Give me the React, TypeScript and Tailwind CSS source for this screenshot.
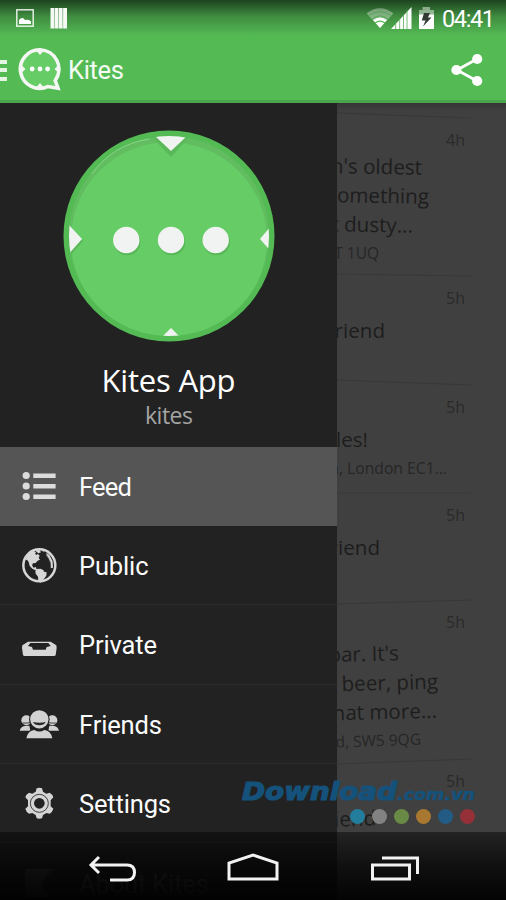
import type { ReactNode } from "react";

function StatusBar() {
  return (
    <div className="flex h-9 shrink-0 items-center bg-linear-to-b from-[#1d431f] via-[#3f8c40] via-45% to-[#54bb54] pl-4 pr-[9px]">
      <svg className="h-[18px] w-[18px]" viewBox="0 0 18 18">
        <rect x="0.8" y="0.8" width="16.4" height="16.4" fill="none" stroke="#fff" strokeOpacity=".85" strokeWidth="1.5" />
        <path d="M3 15V11L5 9.2L7 9L9 11L11 10.8L13 11L15 12.5V15Z" fill="#fff" />
      </svg>
      <svg className="ml-4 h-[22px] w-[18px]" viewBox="0 0 18 22">
        <path d="M.5 1H4.200V21.500H.5ZM4.700 1H8.400V21.500H4.700ZM8.900 1H12.600V21.500H8.900ZM13.100 1H17V21.500H13.100Z" fill="#f5faf5" />
      </svg>
      <div className="ml-auto flex items-center">
        <svg className="h-[22px] w-[28px]" viewBox="0 0 28 22">
          <path d="M0.5 6.3Q14-4 27.5 6.3L14 21Z" fill="#fff" fillOpacity=".35" />
          <path d="M3.5 8.3Q14 1 24.5 8.3M6.5 11.8Q14 6 21.5 11.8" fill="none" stroke="#55a655" strokeWidth="1" />
          <path d="M7 13Q14 8 21 13L14 21Z" fill="#fff" />
          <path d="M9 16Q14 12.4 19 16" fill="none" stroke="#54bb54" strokeWidth="1.2" />
        </svg>
        <svg className="-ml-[3px] h-[22px] w-[21px]" viewBox="0 0 21 22">
          <path d="M0 22L20.5 0V22Z" fill="#fff" />
          <path d="M4.7 15V22M8.7 11V22M12.5 7V22M16 3V22" stroke="#54aa54" strokeWidth=".8" />
        </svg>
        <svg className="ml-[7px] h-[22px] w-[15px]" viewBox="0 0 15 22">
          <path d="M0 3H3.5V0H11V3H15V8H0Z" fill="#fff" fillOpacity=".45" />
          <path d="M0 7.5H15V22H0Z" fill="#fff" />
          <path d="M5 6H11L9 10.5H12.5L4 19.5L6.5 13.5H2.8Z" fill="#333b33" />
        </svg>
        <svg className="ml-[7px] h-7 w-[56px]" viewBox="0 0 56 28">
          <text x="1" y="22.500" textLength="53" fontFamily="Roboto, sans-serif" fontSize="23.500" fill="#fff">04:41</text>
        </svg>
      </div>
    </div>
  );
}

function KitesLogo() {
  return (
    <svg className="ml-[11px] h-[44px] w-[44px]" viewBox="0 0 44 44">
      <path d="M22 2.8A19.3 19.3 0 1 0 30 39.5L40 41.2L37.2 33.5A19.3 19.3 0 0 0 22 2.8Z" fill="#66cc66" stroke="#f5f7f5" strokeWidth="3.6" />
      <path d="M18.5 4H25.5L22 8ZM18.5 40H25.5L22 36ZM4 18.5V25.5L7.5 22ZM40 18.5V25.5L36.5 22Z" fill="#f5f7f5" />
      <g fill="#fff">
        <circle cx="14.2" cy="22" r="2.4" />
        <circle cx="22" cy="22" r="2.4" />
        <circle cx="29.6" cy="22" r="2.4" />
      </g>
    </svg>
  );
}

function ActionBar() {
  return (
    <div className="flex h-[67px] shrink-0 items-center border-b-[3px] border-[#4ba64b] bg-[#54bb54] pt-[2px]">
      <div className="mt-[2px] flex w-[7px] flex-col gap-[4.5px]">
        <i className="h-[4px] bg-[#e4f5e4]" />
        <i className="h-[4px] bg-[#e4f5e4]" />
        <i className="h-[4px] bg-[#e4f5e4]" />
      </div>
      <KitesLogo />
      <svg className="ml-[6px] h-[34px] w-[60px]" viewBox="0 0 60 34">
        <text x="0" y="27" textLength="56" fontFamily="Roboto, sans-serif" fontSize="25.5" fill="#f4fbf4">Kites</text>
      </svg>
      <svg className="ml-auto mr-[23px] mt-px h-[34px] w-[32px]" viewBox="0 0 32 34">
        <path d="M26 6L6 17L26 28" fill="none" stroke="#fff" strokeWidth="2.8" />
        <g fill="#fff">
          <circle cx="26.2" cy="6" r="5.1" />
          <circle cx="5.4" cy="17" r="5.1" />
          <circle cx="26.2" cy="28" r="5.1" />
        </g>
      </svg>
    </div>
  );
}

function Avatar() {
  return (
    <svg className="h-[212px] w-[212px]" viewBox="0 0 212 212">
      <defs>
        <clipPath id="disc">
          <circle cx="106" cy="106" r="100" />
        </clipPath>
      </defs>
      <circle cx="106" cy="106" r="105.5" fill="#54bb54" />
      <circle cx="106" cy="106" r="100" fill="#61bd60" />
      <circle cx="106" cy="110" r="98" fill="#66cc66" clipPath="url(#disc)" />
      <path d="M29 44Q49 15 86 9" fill="none" stroke="#8ad58a" strokeWidth="1" />
      <g clipPath="url(#disc)">
        <path d="M89 7H126L108 27Z" fill="#5ab85a" />
        <path d="M92 6H124L108 21Z" fill="#f1f3f2" />
        <path d="M6 96L20 111L7 126Z" fill="#5ab85a" />
        <path d="M5 94L19 109L5 125ZM213 90L197 109L213 127ZM96 210L108 198L120 210Z" fill="#f1f3f2" />
      </g>
      <g fill="#58b858">
        <circle cx="64.3" cy="112" r="13.3" />
        <circle cx="109" cy="112" r="13.3" />
        <circle cx="153.7" cy="112" r="13.3" />
      </g>
      <g fill="#f1f3f2">
        <circle cx="63.3" cy="110" r="13.2" />
        <circle cx="108" cy="110" r="13.2" />
        <circle cx="152.7" cy="110" r="13.2" />
      </g>
    </svg>
  );
}

function FeedIcon() {
  return (
    <svg className="h-10 w-10" viewBox="0 0 40 40" fill="#dcdcdc">
      <circle cx="7.2" cy="9.5" r="3.6" />
      <circle cx="7.2" cy="20" r="3.6" />
      <circle cx="7.2" cy="30.5" r="3.6" />
      <path d="M14.3 7.5H36.6V12H14.3ZM14.3 18H36.6V22.5H14.3ZM14.3 28.5H36.6V33H14.3Z" />
    </svg>
  );
}

function GlobeIcon() {
  return (
    <svg className="h-10 w-10" viewBox="57 44 120 120" fill="#d6d6d6">
      <circle cx="118" cy="105" r="48" fill="none" stroke="#d6d6d6" strokeWidth="7.5" />
      <path d="M76 90L82 76L92 66L102 62L108 66L105 71L111 74L113 70L119 76L116 82L120 88L113 91L107 98L99 99L96 105L101 112L108 110L110 118L105 119L97 115L89 107L86 95L81 88Z" />
      <path d="M106 61L117 57L123 66L115 69ZM126 60L132 59L130 66ZM109 116L121 115L130 119L132 124L140 126L139 136L130 148L122 157L115 153L114 139L107 130L106 122Z" />
      <path d="M139 67L148 74L158 93L159 112L152 114L151 94L144 82L139 76ZM145 83L151 91L151 98Z" />
      <path d="M138 70L151 95L152 113" fill="none" stroke="#222" strokeWidth="1.3" />
    </svg>
  );
}

function InboxIcon() {
  return (
    <svg className="h-10 w-10" viewBox="57 285 120 120" fill="#d6d6d6">
      <path fillRule="evenodd" d="M84 338H152L169 349L170 357L167 378Q166 381 162 381H74Q70 381 69 378L66 357L67 349ZM91 342L84 351L96 354L99 362H137L140 354L152 351L145 342Z" />
    </svg>
  );
}

function FriendsIcon() {
  return (
    <svg className="h-10 w-10" viewBox="57 41 120 120" fill="#d2d2d2">
      <g id="side-friend">
        <circle cx="79" cy="90" r="15" />
        <path d="M59 121Q62 107 77 106H88L91 121Z" />
        <path d="M67 98Q79 99 90 97" fill="none" stroke="#222" strokeWidth="2.5" />
      </g>
      <use href="#side-friend" transform="translate(236 0) scale(-1 1)" />
      <path d="M75 149Q80 117 103 115H133Q156 117 161 149Z" fill="#222" />
      <circle cx="118" cy="87" r="31" fill="#222" />
      <circle cx="118" cy="87" r="27.5" />
      <path d="M79 144Q84 120 103 119Q118 128 133 119Q153 121 157 144Z" />
      <path d="M99 95Q118 99 137 95Q132 105 118 105Q104 105 99 95Z" fill="#292929" />
    </svg>
  );
}

function GearIcon() {
  return (
    <svg className="h-10 w-10" viewBox="57 278 120 120">
      <path
        d="M107 304L110 294Q118 291 126 294L129 304L139 310L149 307Q158 312 160 321L152 330V348L160 355Q157 366 149 370L139 368L129 374L126 384Q118 386 110 384L107 374L97 368L87 370Q79 366 76 355L84 348V330L76 321Q78 312 87 307L97 310Z"
        fill="#d4d4d4"
      />
      <circle cx="118" cy="339" r="27" fill="none" stroke="#222" strokeWidth="2.5" />
      <circle cx="118" cy="339" r="16" fill="#222" />
    </svg>
  );
}

function AboutIcon() {
  return (
    <svg className="h-10 w-10" viewBox="0 0 40 40">
      <path d="M6 6H34L22 20L30 34H6Z" fill="#3c3c3c" />
    </svg>
  );
}

type Item = { label: string; width: number; icon: ReactNode; tone?: "active" | "faded" };

const items: Item[] = [
  { label: "Feed", width: 53, icon: <FeedIcon />, tone: "active" },
  { label: "Public", width: 69.5, icon: <GlobeIcon /> },
  { label: "Private", width: 78, icon: <InboxIcon /> },
  { label: "Friends", width: 83, icon: <FriendsIcon /> },
  { label: "Settings", width: 92, icon: <GearIcon /> },
  { label: "About Kites", width: 130, icon: <AboutIcon />, tone: "faded" },
];

function MenuRow({ label, width, icon, tone }: Item) {
  return (
    <div
      className={
        tone === "active"
          ? "flex h-[79.3px] shrink-0 items-center bg-[#555] pl-[19px]"
          : tone === "faded"
            ? "flex h-[79.3px] shrink-0 items-center pl-[19px]"
            : "flex h-[79.3px] shrink-0 items-center border-b border-[#2d2d2d] pl-[19px]"
      }
    >
      {icon}
      <svg className="ml-[20px] h-9 w-36" viewBox="0 0 144 36">
        <text x="0" y="27.500" textLength={width} fontFamily="Roboto, sans-serif" fontSize="25.500" fill={tone === "faded" ? "#484848" : "#fbfbfb"}>
          {label}
        </text>
      </svg>
    </div>
  );
}

function Drawer() {
  return (
    <aside className="flex w-[337px] shrink-0 flex-col bg-[#222]">
      <div className="flex h-[343.700px] shrink-0 flex-col items-center pt-[27px] font-['Open_Sans',sans-serif]">
        <Avatar />
        <svg className="mt-[14px] h-[44px] w-[140px]" viewBox="0 0 140 44">
          <text x="2.500" y="35.500" textLength="134" fontSize="31" fill="#fff">Kites App</text>
        </svg>
        <svg className="h-9 w-[60px]" viewBox="0 0 60 36">
          <text x="6" y="24" textLength="48" fontSize="23" fill="#a5a5a5">kites</text>
        </svg>
      </div>
      {items.map((item) => (
        <MenuRow key={item.label} {...item} />
      ))}
    </aside>
  );
}

/* A line of a post; its beginning runs under the open drawer. */
function Line({ text, right, size, tilt = "", muted = false }: { text: string; right: number; size: number; tilt?: string; muted?: boolean }) {
  return (
    <div
      className={`flex h-[29px] items-center justify-end whitespace-nowrap ${tilt} ${muted ? "text-[#262626]" : "text-[#1d1d1d]"}`}
      style={{ width: right, fontSize: size }}
    >
      {text}
    </div>
  );
}

/* The divider over a post runs from its drawer end, `drop` px off, to the right edge. */
function Post({ age, drop, className, children }: { age: string; drop: number; className: string; children: ReactNode }) {
  return (
    <article className={`flex w-[134px] shrink-0 flex-col ${className}`}>
      <svg className="h-px w-[134px] shrink-0 overflow-visible" viewBox="0 0 134 1">
        <path d={`M0 ${drop}L134 1`} stroke="#383838" strokeWidth="1" />
      </svg>
      <div className="flex h-[40px] items-center justify-end pr-[6px] pt-[3px] text-[16px] text-[#2a2a2a]">{age}</div>
      {children}
    </article>
  );
}

function FeedList() {
  return (
    <main className="flex min-w-0 flex-1 flex-col overflow-hidden bg-[#404040] pt-[14px] font-['Open_Sans',sans-serif] shadow-[inset_0_8px_6px_-6px_#303030]">
      <Post age="4h" drop={-4} className="h-[158px]">
        <div className="-mt-[6px]">
          <Line text="n's oldest" right={85} size={20.6} tilt="rotate-1" />
          <Line text="omething" right={92} size={20.6} tilt="rotate-1" />
          <Line text="t dusty..." right={76} size={20.6} tilt="rotate-1" />
        </div>
        <Line text="T 1UQ" right={42} size={15.5} muted />
      </Post>
      <Post age="5h" drop={-1} className="h-[109px]">
        <Line text="riend" right={48} size={20.6} />
      </Post>
      <Post age="5h" drop={-4} className="h-[108px]">
        <Line text="les!" right={31} size={20.6} />
        <Line text="n, London EC1..." right={110} size={15.7} muted />
      </Post>
      <Post age="5h" drop={1} className="h-[107px]">
        <Line text="riend" right={43} size={20.6} />
      </Post>
      <Post age="5h" drop={5} className="h-[159px]">
        <div className="-mt-[1px]">
          <Line text="bar. It's" right={62} size={20.6} tilt="-rotate-[1.500deg]" />
          <Line text="beer, ping" right={101} size={20.6} tilt="-rotate-[1.500deg]" />
          <Line text="hat more..." right={100} size={20.6} tilt="-rotate-[1.500deg]" />
        </div>
        <Line text="d, SW5 9QG" right={84} size={15.5} tilt="-rotate-2" muted />
      </Post>
      <Post age="5h" drop={6} className="h-[140px]">
        <div className="mt-[5px]">
          <Line text="iend" right={39} size={20.6} tilt="-rotate-2" />
        </div>
      </Post>
    </main>
  );
}

function NavigationBar() {
  return (
    <div className="absolute inset-x-0 bottom-0 h-[68px] bg-linear-to-b from-black/45 via-black/75 to-black/95">
      <svg className="h-full w-full" viewBox="0 832 506 68" fill="none" stroke="#f2f2f2" strokeWidth="3">
        <path d="M99 857L91 865L99 873M92 865H127Q134.500 865 134.500 872.500T127 880H110" />
        <path d="M229 879V863L253 855L277 863V879Z" />
        <path d="M372.500 865H409.500V879H372.500ZM382 858H417.500V874" />
      </svg>
    </div>
  );
}

function Watermark() {
  return (
    <svg className="absolute left-[240px] top-[775px] h-[52px] w-[240px]" viewBox="0 0 240 52">
      <g fill="#15527b" stroke="#15527b" fontFamily="'DejaVu Sans', sans-serif" fontWeight="700" fontStyle="italic">
        <text x="2" y="24.500" textLength="155" lengthAdjust="spacingAndGlyphs" fontSize="25" strokeWidth="1.200">Download</text>
        <text x="157" y="24.500" textLength="78" lengthAdjust="spacingAndGlyphs" fontSize="16.500" strokeWidth=".6">.com.vn</text>
      </g>
      <g>
        <circle cx="117.500" cy="41.500" r="7.500" fill="#237d9c" />
        <circle cx="139.500" cy="41.500" r="7.500" fill="#828282" />
        <circle cx="161.500" cy="41.500" r="7.500" fill="#698a44" />
        <circle cx="183.500" cy="41.500" r="7.500" fill="#a87831" />
        <circle cx="205.500" cy="41.500" r="7.500" fill="#225b83" />
        <circle cx="227.500" cy="41.500" r="7.500" fill="#953039" />
      </g>
    </svg>
  );
}

export default function App() {
  return (
    <div className="relative flex h-[900px] w-[506px] flex-col overflow-hidden bg-[#222]">
      <StatusBar />
      <ActionBar />
      <div className="flex min-h-0 flex-1 overflow-hidden">
        <Drawer />
        <FeedList />
      </div>
      <Watermark />
      <NavigationBar />
    </div>
  );
}
